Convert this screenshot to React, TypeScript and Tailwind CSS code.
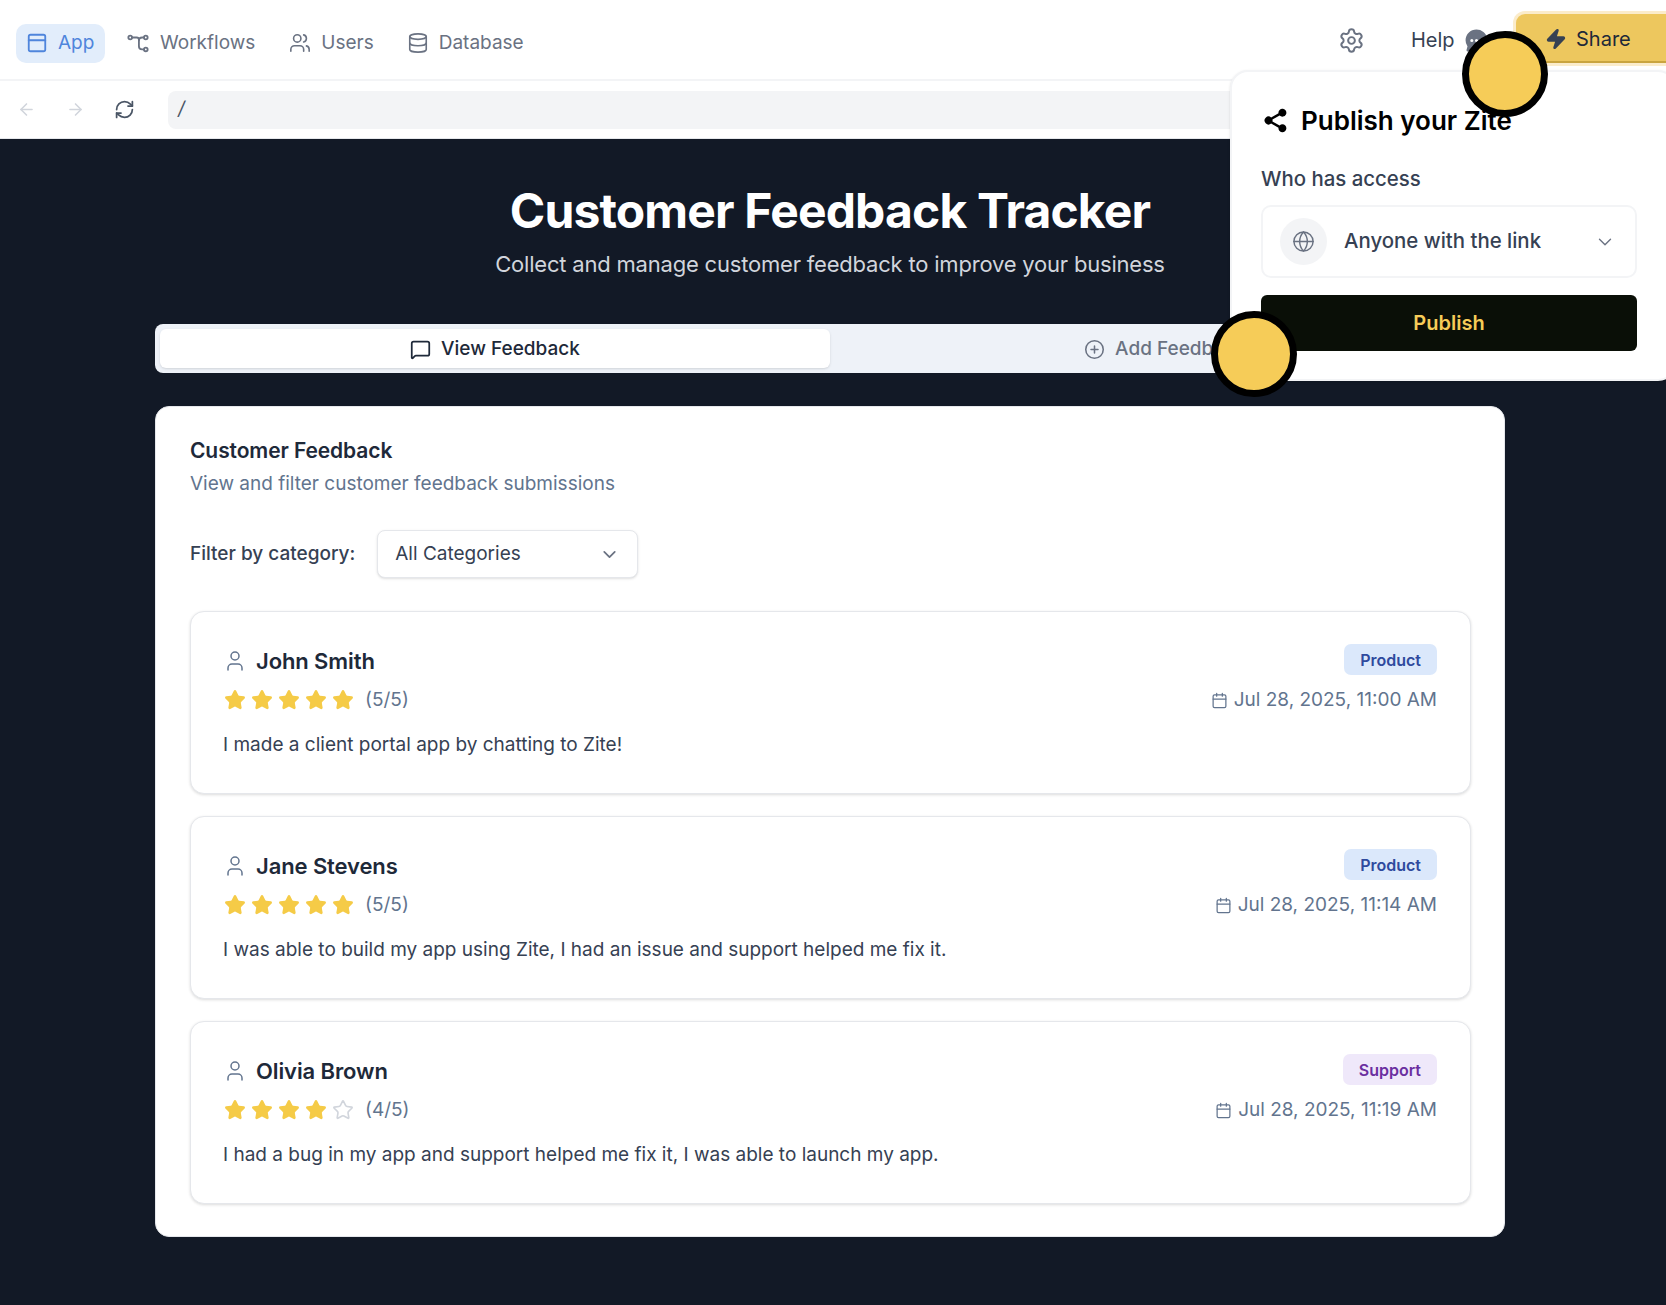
import React from 'react';
import {
  PanelTop,
  Users,
  Database,
  ArrowLeft,
  ArrowRight,
  RefreshCw,
  Settings,
  Zap,
  Globe,
  ChevronDown,
  MessageSquare,
  CirclePlus,
  User,
  Calendar,
  Star,
} from 'lucide-react';
import { IoChatbubbleEllipses, IoShareSocialSharp } from 'react-icons/io5';

const WorkflowIcon: React.FC<{ className?: string }> = ({ className }) => (
  <svg viewBox="0 0 24 24" fill="none" stroke="currentColor" strokeWidth="2" strokeLinecap="round" className={className}>
    <circle cx="3.5" cy="6" r="2" />
    <circle cx="20.5" cy="6" r="2" />
    <circle cx="20.5" cy="19" r="2" />
    <path d="M5.5 6h5c1.5 0 2.5 1 2.5 2.5v7c0 2 1.5 3.500 3.500 3.500h2" />
    <path d="M18.500 6h-2c-2 0-3.500 1-3.500 3" />
  </svg>
);

interface Feedback {
  name: string;
  rating: number;
  date: string;
  text: string;
  category: 'Product' | 'Support';
}

const feedback: Feedback[] = [
  { name: 'John Smith', rating: 5, date: 'Jul 28, 2025, 11:00 AM', text: 'I made a client portal app by chatting to Zite!', category: 'Product' },
  { name: 'Jane Stevens', rating: 5, date: 'Jul 28, 2025, 11:14 AM', text: 'I was able to build my app using Zite, I had an issue and support helped me fix it.', category: 'Product' },
  { name: 'Olivia Brown', rating: 4, date: 'Jul 28, 2025, 11:19 AM', text: 'I had a bug in my app and support helped me fix it, I was able to launch my app.', category: 'Support' },
];

const FeedbackCard: React.FC<{ item: Feedback }> = ({ item }) => (
  <div className="h-[183px] rounded-[14px] border border-gray-200 bg-white pl-[32px] pr-[33px] pt-[33px] shadow-[0_1px_3px_rgba(0,0,0,0.14)]">
    <div className="flex justify-between">
      <div>
        <div className="flex h-[32px] items-center gap-[9px]">
          <User className="h-[24px] w-[24px] text-slate-500" strokeWidth={1.5} />
          <span className="text-[22px] font-semibold tracking-[-0.1px] text-gray-800">{item.name}</span>
        </div>
        <div className="mt-[9px] flex h-[28px] items-center">
          <div className="ml-[1px] flex gap-[5px]">
            {[1, 2, 3, 4, 5].map((n) => (
              <Star
                key={n}
                strokeWidth={1.75}
                className={n <= item.rating ? 'h-[22px] w-[22px] fill-[#f5cb47] text-[#f5cb47]' : 'h-[22px] w-[22px] text-gray-300'}
              />
            ))}
          </div>
          <span className="ml-[11px] text-[19px] text-slate-500">({item.rating}/5)</span>
        </div>
      </div>
      <div className="flex flex-col items-end">
        <span
          className={
            item.category === 'Product'
              ? 'mt-[-1px] flex h-[31px] items-center rounded-[7px] bg-[#dbe8fb] px-[16px] text-[16px] font-semibold text-[#2f4a9e]'
              : 'mt-[-1px] flex h-[31px] items-center rounded-[7px] bg-[#efe8fa] px-[16px] text-[16px] font-semibold text-[#6b2fa0]'
          }
        >
          {item.category}
        </span>
        <div className="mt-[11px] flex h-[28px] items-center gap-[6px] text-[19px] text-slate-500">
          <Calendar className="h-[17px] w-[17px]" strokeWidth={1.75} />
          <span>{item.date}</span>
        </div>
      </div>
    </div>
    <p className="mt-[17px] text-[19px] leading-[28px] text-gray-700">{item.text}</p>
  </div>
);

const Marker: React.FC<{ className: string }> = ({ className }) => (
  <div className={`absolute h-[86px] w-[86px] rounded-full border-[7px] border-black bg-[#f6cc58] ${className}`} />
);

export default function App() {
  return (
    <div className="relative h-[1305px] overflow-hidden bg-[#121926] font-['Inter',sans-serif]">
      {/* Top nav */}
      <div className="flex h-[81px] items-center justify-between border-b-2 border-gray-100 bg-white pl-[16px] pt-[7px]">
        <div className="flex items-center gap-[22px] text-[19px] text-gray-500">
          <div className="flex h-[39px] w-[89px] items-center gap-[10px] rounded-[10px] bg-[#e2edfb] pl-[10px] text-[#4f85dc]">
            <PanelTop className="h-[22px] w-[22px]" strokeWidth={2} />
            <span>App</span>
          </div>
          <div className="flex items-center gap-[11px]">
            <WorkflowIcon className="h-[22px] w-[22px]" />
            <span>Workflows</span>
          </div>
          <div className="ml-[12px] flex items-center gap-[10px]">
            <Users className="h-[22px] w-[22px]" strokeWidth={1.75} />
            <span>Users</span>
          </div>
          <div className="ml-[11px] flex items-center gap-[10px]">
            <Database className="h-[22px] w-[22px]" strokeWidth={1.75} />
            <span>Database</span>
          </div>
        </div>
      </div>

      {/* URL bar */}
      <div className="flex h-[58px] items-center border-b border-gray-200 bg-white pl-[17px]">
        <ArrowLeft className="h-[19px] w-[19px] text-gray-300" />
        <ArrowRight className="ml-[30px] h-[19px] w-[19px] text-gray-300" />
        <RefreshCw className="ml-[29px] h-[21px] w-[21px] text-gray-600" />
        <div className="ml-[33px] flex h-[38px] w-[1100px] items-center rounded-[8px] bg-gray-100 pl-[10px] text-[19px] italic text-gray-600">/</div>
      </div>

      {/* Page content */}
      <div className="mx-[155px] w-[1350px]">
        <h1 className="mt-[42px] text-center text-[48px] font-bold leading-[60px] tracking-[-0.85px] text-white">Customer Feedback Tracker</h1>
        <p className="mt-[7px] text-center text-[22px] leading-[32px] tracking-[-0.2px] text-gray-300">Collect and manage customer feedback to improve your business</p>

        <div className="mt-[44px] flex h-[49px] items-center rounded-[8px] bg-[#eef2f8] p-[5px]">
          <div className="flex h-[39px] flex-1 items-center justify-center gap-[10px] rounded-[6px] bg-white pt-[1px] text-[19px] font-medium text-gray-800 shadow-sm">
            <MessageSquare className="h-[21px] w-[21px]" strokeWidth={2} />
            <span>View Feedback</span>
          </div>
          <div className="flex h-[39px] flex-1 items-center justify-center gap-[10px] pt-[1px] text-[19px] font-medium text-gray-500">
            <CirclePlus className="h-[21px] w-[21px]" strokeWidth={1.75} />
            <span>Add Feedback</span>
          </div>
        </div>

        <div className="mt-[33px] h-[831px] rounded-[14px] border border-gray-200 bg-white pl-[34px] pr-[33px] pt-[28px]">
          <h2 className="text-[21px] font-semibold leading-[32px] tracking-[-0.1px] text-gray-800">Customer Feedback</h2>
          <p className="text-[19px] leading-[33px] text-slate-500">View and filter customer feedback submissions</p>

          <div className="mt-[30px] flex items-center gap-[22px]">
            <span className="text-[19px] font-medium text-gray-700">Filter by category:</span>
            <div className="flex h-[48px] w-[261px] items-center justify-between rounded-[8px] border border-gray-200 bg-white pl-[17px] pr-[17px] text-[19px] text-gray-700 shadow-sm">
              <span>All Categories</span>
              <ChevronDown className="h-[21px] w-[21px] text-gray-500" />
            </div>
          </div>

          <div className="mt-[33px] flex flex-col gap-[22px]">
            {feedback.map((item) => (
              <FeedbackCard key={item.name} item={item} />
            ))}
          </div>
        </div>
      </div>

      {/* Header right, sits over the nav */}
      <div className="absolute left-[1338px] top-[25px] flex items-center">
        <Settings className="h-[27px] w-[27px] text-gray-500" strokeWidth={1.75} />
        <span className="ml-[46px] text-[20px] text-gray-700">Help</span>
        <IoChatbubbleEllipses className="ml-[9px] h-[25px] w-[25px] text-gray-500" />
      </div>
      <div className="absolute left-[1516px] top-[14px] flex h-[49px] w-[160px] items-center rounded-[9px] border-b-2 border-[#c9a43f] bg-[#edc75e] pl-[29px] pt-[3px] text-[20px] text-gray-800 shadow-[0_0_0_3px_#fbeccb]">
        <Zap className="h-[22px] w-[22px] fill-gray-700 text-gray-700" />
        <span className="ml-[9px]">Share</span>
      </div>

      {/* Publish popover */}
      <div className="absolute left-[1230px] top-[70px] h-[311px] w-[446px] rounded-[18px] border-2 border-gray-100 bg-white pl-[29px] shadow-sm">
        <div className="mt-[29px] flex items-center gap-[11px]">
          <IoShareSocialSharp className="h-[29px] w-[29px] text-black" />
          <span className="text-[26px] font-semibold text-black">Publish your Zite</span>
        </div>
        <p className="mt-[25px] text-[20.400px] font-medium leading-[28px] text-gray-700">Who has access</p>
        <div className="mt-[12px] flex h-[73px] w-[376px] items-center rounded-[10px] border-2 border-gray-100 pl-[17px] pr-[19px]">
          <div className="flex h-[47px] w-[47px] items-center justify-center rounded-full bg-gray-100">
            <Globe className="h-[23px] w-[23px] text-gray-500" strokeWidth={1.5} />
          </div>
          <span className="ml-[17px] flex-1 text-[20.400px] font-medium text-gray-700">Anyone with the link</span>
          <ChevronDown className="h-[22px] w-[22px] text-gray-500" strokeWidth={1.5} />
        </div>
        <div className="mt-[17px] flex h-[56px] w-[376px] items-center justify-center rounded-[6px] bg-[#0a0f07] text-[20px] font-semibold text-[#f6cc58]">
          Publish
        </div>
      </div>

      {/* Tutorial markers */}
      <Marker className="left-[1462px] top-[31px]" />
      <Marker className="left-[1211px] top-[311px]" />
    </div>
  );
}
